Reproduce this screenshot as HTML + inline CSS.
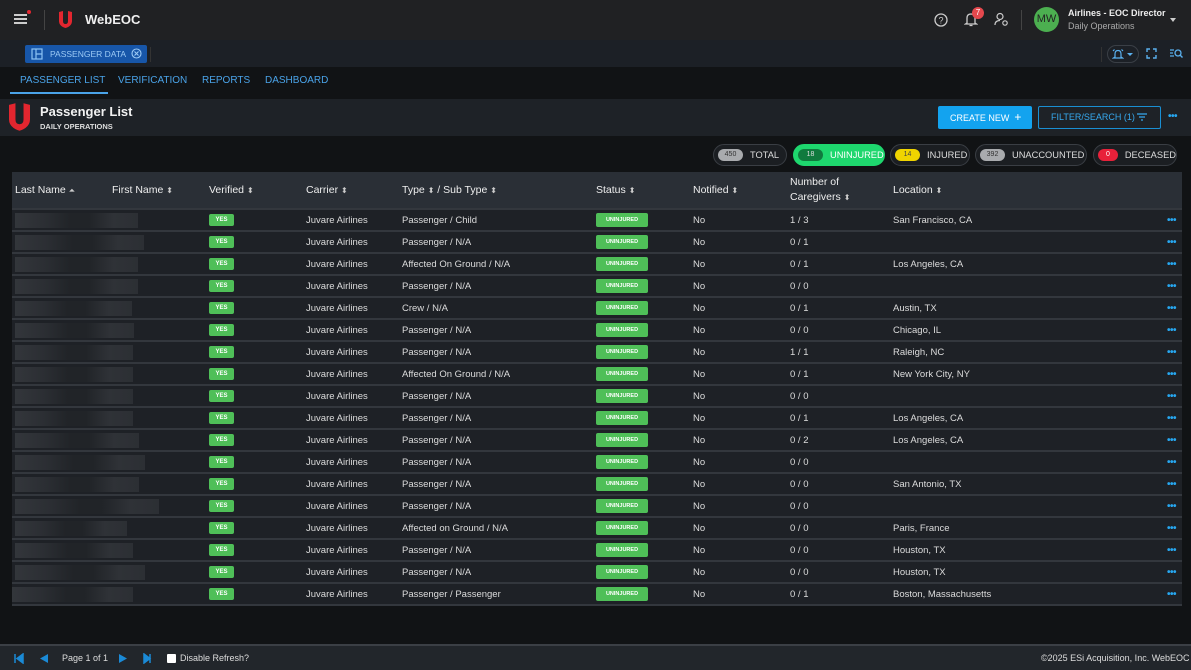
<!DOCTYPE html>
<html><head><meta charset="utf-8"><style>
*{box-sizing:border-box;margin:0;padding:0}
body{width:1191px;height:670px;overflow:hidden;background:#111315;font-family:"Liberation Sans",Arial,sans-serif;color:#e6e6e6;position:relative}
.abs{position:absolute}
.top{left:0;top:0;width:1191px;height:40px;background:#202123}
.tabs{left:0;top:40px;width:1191px;height:27px;background:#1c2026}
.nav{left:0;top:67px;width:1191px;height:32px;background:#111315}
.title{left:0;top:99px;width:1191px;height:37px;background:#1e2227}
.navi{top:75px;font-size:10px;color:#4aa3e8;white-space:nowrap}
.pill{top:144px;height:22px;border-radius:11px;border:1px solid #3a3e44;background:#1b1e22;font-size:9.3px;color:#ddd;display:flex;align-items:center;padding-left:4px;white-space:nowrap}
.pill b{display:inline-block;height:12px;line-height:12px;border-radius:6px;font-size:7px;font-weight:normal;text-align:center;width:25px;margin-right:7px}
table{position:absolute;left:12px;top:172px;width:1170px;border-collapse:collapse;font-size:9.5px;table-layout:fixed}
th{background:#2a2f36;height:37px;text-align:left;font-weight:normal;font-size:10.5px;color:#eee;padding-left:3px}
td{height:22px;background:#1e2126;border-top:2px solid #33373d;padding-left:3px;color:#dcdcdc;vertical-align:middle;white-space:nowrap}
.yes{display:inline-block;vertical-align:middle;background:#4fbf58;color:#fff;font-size:6px;font-weight:bold;width:25px;height:12px;line-height:12px;text-align:center;border-radius:2px}
.un{display:inline-block;vertical-align:middle;background:#4fbf58;color:#fff;font-size:5.5px;font-weight:bold;width:52px;height:14px;line-height:14px;text-align:center;border-radius:2px}
.blob{display:block;height:15px;background:linear-gradient(90deg,#33363b 0%,#2b2e33 25%,#212428 45%,#212428 60%,#2f3237 80%,#2c2f34 100%)}
.dots{color:#27a7f0;font-weight:bold;font-size:10px;letter-spacing:-0.5px}
td.dots{text-align:right;padding-right:6px}
.s{font-size:8px;color:#ccc}
.foot{left:0;top:644px;width:1191px;height:26px;background:#22262b;border-top:2px solid #3b3f45}
</style></head><body>
<div class="abs top"></div>
<div class="abs" style="left:14px;top:14px;width:13px;height:2px;background:#ccc;box-shadow:0 4px 0 #ccc,0 8px 0 #ccc"></div>
<div class="abs" style="left:27px;top:10px;width:4px;height:4px;border-radius:2px;background:#e3262f"></div>
<div class="abs" style="left:44px;top:10px;width:1px;height:20px;background:#444"></div>
<svg class="abs" style="left:59px;top:11px" width="13" height="17" viewBox="0 0 13 17"><path d="M0 1 L4 0 L4 10 Q4 13 6.5 13 Q9 13 9 10 L9 0 L13 1 L13 10 Q13 15 6.5 17 Q0 15 0 10Z" fill="#e3262f"/></svg>
<div class="abs" style="left:85px;top:12px;font-size:13px;font-weight:bold;color:#f0f0f0">WebEOC</div>
<svg class="abs" style="left:934px;top:13px" width="14" height="14"><circle cx="7" cy="7" r="6" fill="none" stroke="#ccc" stroke-width="1.3"/><text x="7" y="10.5" font-size="9" fill="#ccc" text-anchor="middle" font-family="Liberation Sans">?</text></svg>
<svg class="abs" style="left:964px;top:12px" width="14" height="15"><path d="M3 11 L3 6 Q3 2 7 2 Q11 2 11 6 L11 11 L12.5 12 L1.5 12Z M5.5 13.5 L8.5 13.5" fill="none" stroke="#ccc" stroke-width="1.3"/></svg>
<div class="abs" style="left:972px;top:7px;width:12px;height:12px;border-radius:6px;background:#e5484d;font-size:8px;text-align:center;line-height:12px;color:#fff">7</div>
<svg class="abs" style="left:994px;top:12px" width="15" height="15"><circle cx="6" cy="4.5" r="3" fill="none" stroke="#ccc" stroke-width="1.2"/><path d="M1 13 Q1 8.5 6 8.5" fill="none" stroke="#ccc" stroke-width="1.2"/><circle cx="11" cy="11" r="2.2" fill="none" stroke="#ccc" stroke-width="1.2"/></svg>
<div class="abs" style="left:1021px;top:10px;width:1px;height:20px;background:#444"></div>
<div class="abs" style="left:1034px;top:7px;width:25px;height:25px;border-radius:13px;background:#4caf50;color:#222;font-size:11px;text-align:center;line-height:25px">MW</div>
<div class="abs" style="left:1068px;top:8px;font-size:9px;font-weight:bold;color:#eee">Airlines - EOC Director</div>
<div class="abs" style="left:1068px;top:21px;font-size:9px;color:#aaa">Daily Operations</div>
<div class="abs" style="left:1170px;top:18px;border:3.5px solid transparent;border-top:4px solid #ccc"></div>

<div class="abs tabs"></div>
<div class="abs" style="left:25px;top:45px;width:122px;height:18px;background:#1756a9;border-radius:2px"></div>
<svg class="abs" style="left:31px;top:48px" width="12" height="12"><rect x="1" y="1" width="10" height="10" fill="none" stroke="#8cc3f5" stroke-width="1.2"/><path d="M5 1 V11 M5 6 H11" stroke="#8cc3f5" stroke-width="1.2"/></svg>
<div class="abs" style="left:50px;top:49px;font-size:8.5px;color:#9ccaf5;white-space:nowrap">PASSENGER DATA</div>
<svg class="abs" style="left:131px;top:48px" width="11" height="11"><circle cx="5.5" cy="5.5" r="4.5" fill="none" stroke="#9ccaf5" stroke-width="1.1"/><path d="M3.5 3.5 L7.5 7.5 M7.5 3.5 L3.5 7.5" stroke="#9ccaf5" stroke-width="1.1"/></svg>
<div class="abs" style="left:150px;top:47px;width:1px;height:15px;background:#333"></div>
<div class="abs" style="left:1101px;top:47px;width:1px;height:15px;background:#333"></div>
<div class="abs" style="left:1107px;top:45px;width:32px;height:18px;border:1px solid #3a3f46;border-radius:9px"></div>
<svg class="abs" style="left:1112px;top:48px" width="12" height="12"><path d="M3 9 L3 6 Q3 2.5 6 2.5 Q9 2.5 9 6 L9 9 L10.5 10 L1.5 10Z M1 3 L2.5 1.5 M11 3 L9.5 1.5" fill="none" stroke="#5ab0ee" stroke-width="1.2"/></svg>
<div class="abs" style="left:1127px;top:53px;border:3px solid transparent;border-top:3px solid #5ab0ee"></div>
<svg class="abs" style="left:1146px;top:48px" width="11" height="11"><path d="M1 4V1H4 M7 1H10V4 M10 7V10H7 M4 10H1V7" fill="none" stroke="#5ab0ee" stroke-width="1.4"/></svg>
<svg class="abs" style="left:1169px;top:48px" width="14" height="11"><path d="M1 2H5 M1 5H4 M1 8H5" stroke="#5ab0ee" stroke-width="1.2"/><circle cx="9" cy="5" r="3" fill="none" stroke="#5ab0ee" stroke-width="1.3"/><path d="M11 7 L13.5 9.5" stroke="#5ab0ee" stroke-width="1.4"/></svg>

<div class="abs nav"></div>
<div class="abs navi" style="left:20px">PASSENGER LIST</div>
<div class="abs" style="left:10px;top:92px;width:98px;height:2px;background:#4aa3e8"></div>
<div class="abs navi" style="left:118px">VERIFICATION</div>
<div class="abs navi" style="left:202px">REPORTS</div>
<div class="abs navi" style="left:265px">DASHBOARD</div>

<div class="abs title"></div>
<svg class="abs" style="left:9px;top:101px" width="21" height="32" viewBox="0 0 13 17"><path d="M0 1 L4 0 L4 10 Q4 13 6.5 13 Q9 13 9 10 L9 0 L13 1 L13 10 Q13 15 6.5 17 Q0 15 0 10Z" fill="#e3262f"/></svg>
<div class="abs" style="left:40px;top:104px;font-size:13px;font-weight:bold;color:#f2f2f2">Passenger List</div>
<div class="abs" style="left:40px;top:122px;font-size:7.5px;font-weight:bold;color:#ddd">DAILY OPERATIONS</div>
<div class="abs" style="left:938px;top:106px;width:94px;height:23px;background:#13a3ef;border-radius:2px;font-size:9px;color:#fff;line-height:23px;padding-left:12px;white-space:nowrap">CREATE NEW &nbsp;<b style="font-size:12px;font-weight:normal">+</b></div>
<div class="abs" style="left:1038px;top:106px;width:123px;height:23px;border:1.5px solid #1a8fd3;border-radius:2px;font-size:9px;color:#36a9ef;line-height:20px;padding-left:12px;white-space:nowrap">FILTER/SEARCH (1)</div>
<svg class="abs" style="left:1137px;top:113px" width="10" height="8"><path d="M0 1H10 M2 4H8 M4 7H6" stroke="#36a9ef" stroke-width="1.2"/></svg>
<div class="abs dots" style="left:1168px;top:111px">•••</div>

<div class="abs pill" style="left:713px;width:74px"><b style="background:#a9abae;color:#333">450</b>TOTAL</div>
<div class="abs pill" style="left:793px;width:92px;background:#1ed76e;border-color:#1ed76e;color:#fff"><b style="background:#107a3e;color:#ddd">18</b>UNINJURED</div>
<div class="abs pill" style="left:890px;width:80px"><b style="background:#f0d400;color:#444">14</b>INJURED</div>
<div class="abs pill" style="left:975px;width:112px"><b style="background:#a9abae;color:#333">392</b>UNACCOUNTED</div>
<div class="abs pill" style="left:1093px;width:84px"><b style="background:#e8213a;color:#fff">0</b>DECEASED</div>

<table>
<tr><th style="width:97px">Last Name <span class="s">⏶</span></th><th style="width:97px">First Name <span class="s">⬍</span></th><th style="width:97px">Verified <span class="s">⬍</span></th><th style="width:96px">Carrier <span class="s">⬍</span></th><th style="width:194px">Type <span class="s">⬍</span> / Sub Type <span class="s">⬍</span></th><th style="width:97px">Status <span class="s">⬍</span></th><th style="width:97px">Notified <span class="s">⬍</span></th><th style="width:103px;line-height:15px">Number of<br>Caregivers <span class="s">⬍</span></th><th>Location <span class="s">⬍</span></th><th style="width:40px"></th></tr>
<tr><td colspan="2"><span class="blob" style="width:123px"></span></td><td><span class="yes">YES</span></td><td>Juvare Airlines</td><td>Passenger / Child</td><td><span class="un">UNINJURED</span></td><td>No</td><td>1 / 3</td><td>San Francisco, CA</td><td class="dots">•••</td></tr>
<tr><td colspan="2"><span class="blob" style="width:129px"></span></td><td><span class="yes">YES</span></td><td>Juvare Airlines</td><td>Passenger / N/A</td><td><span class="un">UNINJURED</span></td><td>No</td><td>0 / 1</td><td></td><td class="dots">•••</td></tr>
<tr><td colspan="2"><span class="blob" style="width:123px"></span></td><td><span class="yes">YES</span></td><td>Juvare Airlines</td><td>Affected On Ground / N/A</td><td><span class="un">UNINJURED</span></td><td>No</td><td>0 / 1</td><td>Los Angeles, CA</td><td class="dots">•••</td></tr>
<tr><td colspan="2"><span class="blob" style="width:123px"></span></td><td><span class="yes">YES</span></td><td>Juvare Airlines</td><td>Passenger / N/A</td><td><span class="un">UNINJURED</span></td><td>No</td><td>0 / 0</td><td></td><td class="dots">•••</td></tr>
<tr><td colspan="2"><span class="blob" style="width:117px"></span></td><td><span class="yes">YES</span></td><td>Juvare Airlines</td><td>Crew / N/A</td><td><span class="un">UNINJURED</span></td><td>No</td><td>0 / 1</td><td>Austin, TX</td><td class="dots">•••</td></tr>
<tr><td colspan="2"><span class="blob" style="width:119px"></span></td><td><span class="yes">YES</span></td><td>Juvare Airlines</td><td>Passenger / N/A</td><td><span class="un">UNINJURED</span></td><td>No</td><td>0 / 0</td><td>Chicago, IL</td><td class="dots">•••</td></tr>
<tr><td colspan="2"><span class="blob" style="width:118px"></span></td><td><span class="yes">YES</span></td><td>Juvare Airlines</td><td>Passenger / N/A</td><td><span class="un">UNINJURED</span></td><td>No</td><td>1 / 1</td><td>Raleigh, NC</td><td class="dots">•••</td></tr>
<tr><td colspan="2"><span class="blob" style="width:118px"></span></td><td><span class="yes">YES</span></td><td>Juvare Airlines</td><td>Affected On Ground / N/A</td><td><span class="un">UNINJURED</span></td><td>No</td><td>0 / 1</td><td>New York City, NY</td><td class="dots">•••</td></tr>
<tr><td colspan="2"><span class="blob" style="width:118px"></span></td><td><span class="yes">YES</span></td><td>Juvare Airlines</td><td>Passenger / N/A</td><td><span class="un">UNINJURED</span></td><td>No</td><td>0 / 0</td><td></td><td class="dots">•••</td></tr>
<tr><td colspan="2"><span class="blob" style="width:118px"></span></td><td><span class="yes">YES</span></td><td>Juvare Airlines</td><td>Passenger / N/A</td><td><span class="un">UNINJURED</span></td><td>No</td><td>0 / 1</td><td>Los Angeles, CA</td><td class="dots">•••</td></tr>
<tr><td colspan="2"><span class="blob" style="width:124px"></span></td><td><span class="yes">YES</span></td><td>Juvare Airlines</td><td>Passenger / N/A</td><td><span class="un">UNINJURED</span></td><td>No</td><td>0 / 2</td><td>Los Angeles, CA</td><td class="dots">•••</td></tr>
<tr><td colspan="2"><span class="blob" style="width:130px"></span></td><td><span class="yes">YES</span></td><td>Juvare Airlines</td><td>Passenger / N/A</td><td><span class="un">UNINJURED</span></td><td>No</td><td>0 / 0</td><td></td><td class="dots">•••</td></tr>
<tr><td colspan="2"><span class="blob" style="width:124px"></span></td><td><span class="yes">YES</span></td><td>Juvare Airlines</td><td>Passenger / N/A</td><td><span class="un">UNINJURED</span></td><td>No</td><td>0 / 0</td><td>San Antonio, TX</td><td class="dots">•••</td></tr>
<tr><td colspan="2"><span class="blob" style="width:144px"></span></td><td><span class="yes">YES</span></td><td>Juvare Airlines</td><td>Passenger / N/A</td><td><span class="un">UNINJURED</span></td><td>No</td><td>0 / 0</td><td></td><td class="dots">•••</td></tr>
<tr><td colspan="2"><span class="blob" style="width:112px"></span></td><td><span class="yes">YES</span></td><td>Juvare Airlines</td><td>Affected on Ground / N/A</td><td><span class="un">UNINJURED</span></td><td>No</td><td>0 / 0</td><td>Paris, France</td><td class="dots">•••</td></tr>
<tr><td colspan="2"><span class="blob" style="width:118px"></span></td><td><span class="yes">YES</span></td><td>Juvare Airlines</td><td>Passenger / N/A</td><td><span class="un">UNINJURED</span></td><td>No</td><td>0 / 0</td><td>Houston, TX</td><td class="dots">•••</td></tr>
<tr><td colspan="2"><span class="blob" style="width:130px"></span></td><td><span class="yes">YES</span></td><td>Juvare Airlines</td><td>Passenger / N/A</td><td><span class="un">UNINJURED</span></td><td>No</td><td>0 / 0</td><td>Houston, TX</td><td class="dots">•••</td></tr>
<tr><td colspan="2" style="border-bottom:2px solid #33373d"><span class="blob" style="width:121px;margin-left:-3px"></span></td><td style="border-bottom:2px solid #33373d"><span class="yes">YES</span></td><td style="border-bottom:2px solid #33373d">Juvare Airlines</td><td style="border-bottom:2px solid #33373d">Passenger / Passenger</td><td style="border-bottom:2px solid #33373d"><span class="un">UNINJURED</span></td><td style="border-bottom:2px solid #33373d">No</td><td style="border-bottom:2px solid #33373d">0 / 1</td><td style="border-bottom:2px solid #33373d">Boston, Massachusetts</td><td class="dots" style="border-bottom:2px solid #33373d">•••</td></tr>
</table>

<div class="abs foot"></div>
<svg class="abs" style="left:14px;top:653px" width="140" height="11"><path d="M1 1V10 M9 1 L3 5.5 L9 10Z" stroke="#1b8ad6" fill="#1b8ad6" stroke-width="1.5"/><path d="M34 1 L26 5.5 L34 10Z" fill="#1b8ad6"/><path d="M105 1 L113 5.5 L105 10Z" fill="#1b8ad6"/><path d="M130 1 L136 5.5 L130 10Z M136 1V10" stroke="#1b8ad6" fill="#1b8ad6" stroke-width="1.5"/></svg>
<div class="abs" style="left:62px;top:653px;font-size:9px;color:#ddd">Page 1 of 1</div>
<div class="abs" style="left:167px;top:654px;width:9px;height:9px;background:#fff;border-radius:1px"></div>
<div class="abs" style="left:180px;top:653px;font-size:9px;color:#ddd">Disable Refresh?</div>
<div class="abs" style="left:1041px;top:653px;font-size:9px;color:#ddd">©2025 ESi Acquisition, Inc. WebEOC</div>
</body></html>
